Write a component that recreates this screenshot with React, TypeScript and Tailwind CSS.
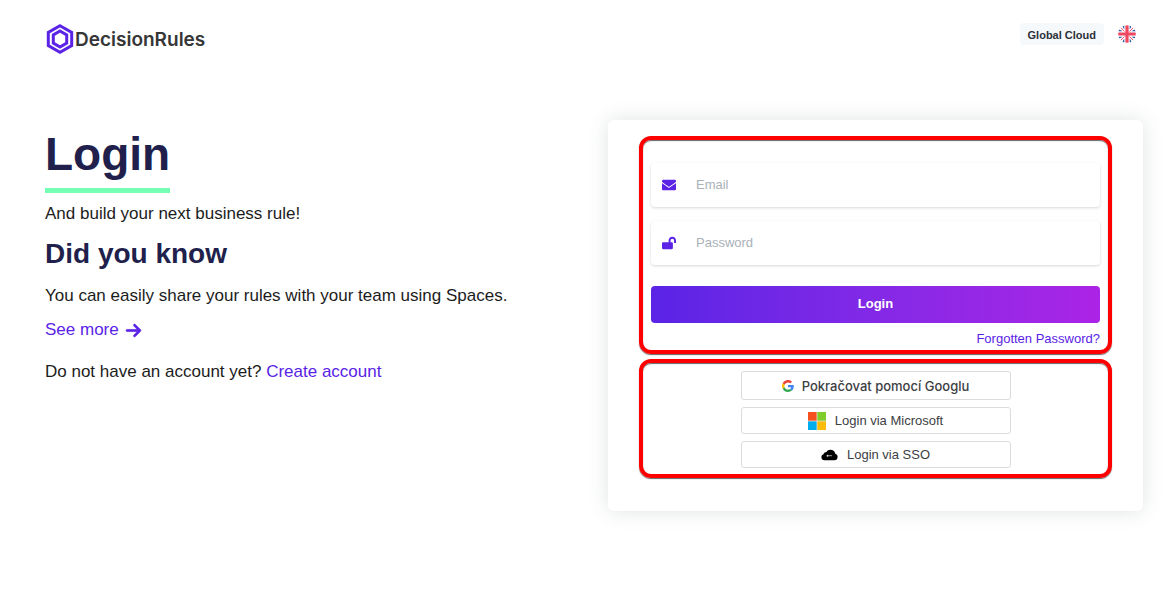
import type { ReactNode } from 'react';
import { FaEnvelope, FaLockOpen } from 'react-icons/fa';
import { FaArrowRight } from 'react-icons/fa6';

function Logo() {
  return (
    <a href="#home" className="flex items-center text-[#363636]">
      <svg viewBox="0 0 30 32" className="h-8 w-[30px]" fill="none" aria-hidden="true">
        <path d="M15 2.800 26.700 9.400v13.200L15 29.200 3.300 22.600V9.400z" stroke="#5a23e6" strokeWidth="3" />
        <path d="M15 8 21.700 11.900v8.200L15 24 8.300 20.100v-8.200z" stroke="#5a23e6" strokeWidth="3" />
      </svg>
      <span className="pt-0.5 font-[Inter,sans-serif] text-[19px] leading-[30px] font-semibold">DecisionRules</span>
    </a>
  );
}

function FlagIcon() {
  return (
    <svg viewBox="0 0 18 18" className="size-[18px]" aria-hidden="true">
      <clipPath id="flag-clip">
        <circle cx="9" cy="9" r="8.8" />
      </clipPath>
      <g clipPath="url(#flag-clip)">
        <rect width="18" height="18" fill="#fff" />
        <path d="M3.800 0H6.300V4.600zM14.200 0H11.700V4.600zM3.800 18H6.300V13.400zM14.200 18H11.700V13.400zM0 3.800V6.300H4.600zM18 3.800V6.300H13.400zM0 14.200V11.700H4.600zM18 14.200V11.700H13.400z" fill="#1e50a0" />
        <path d="M2 2 6.500 6.500M16 2 11.500 6.500M2 16 6.500 11.500M16 16 11.500 11.500" stroke="#f0506a" strokeWidth="1" />
        <path d="M9 0v18M0 9h18" stroke="#f0465f" strokeWidth="3.200" />
      </g>
    </svg>
  );
}

function GoogleIcon() {
  return (
    <svg viewBox="0 0 48 48" className="size-3" aria-hidden="true">
      <path fill="#EA4335" d="M24 9.5c3.54 0 6.71 1.22 9.21 3.6l6.85-6.85C35.9 2.38 30.47 0 24 0 14.62 0 6.51 5.38 2.56 13.22l7.98 6.19C12.43 13.72 17.74 9.5 24 9.5z" />
      <path fill="#4285F4" d="M46.98 24.55c0-1.57-.15-3.09-.38-4.55H24v9.02h12.94c-.58 2.96-2.26 5.48-4.78 7.18l7.73 6c4.51-4.18 7.09-10.36 7.09-17.65z" />
      <path fill="#FBBC05" d="M10.53 28.59c-.48-1.45-.76-2.99-.76-4.59s.27-3.14.76-4.59l-7.98-6.19C.92 16.46 0 20.12 0 24c0 3.88.92 7.54 2.56 10.78l7.97-6.19z" />
      <path fill="#34A853" d="M24 48c6.48 0 11.93-2.13 15.89-5.81l-7.73-6c-2.15 1.45-4.92 2.3-8.16 2.3-6.26 0-11.57-4.22-13.47-9.91l-7.98 6.19C6.51 42.62 14.62 48 24 48z" />
    </svg>
  );
}

function MicrosoftIcon() {
  return (
    <svg viewBox="0 0 18 18" className="size-[18px]" aria-hidden="true">
      <rect width="18" height="18" fill="#e6e0d8" />
      <rect width="8.6" height="8.6" fill="#f4511e" />
      <rect x="9.4" width="8.6" height="8.6" fill="#80cc28" />
      <rect y="9.4" width="8.6" height="8.6" fill="#00adef" />
      <rect x="9.4" y="9.4" width="8.6" height="8.6" fill="#fbbc09" />
    </svg>
  );
}

function CloudKeyIcon() {
  return (
    <svg viewBox="0 0 17 12" className="h-3 w-[17px]" aria-hidden="true">
      <path d="M3.600 11.200C1.600 11.200.4 10 .4 8.200c0-1.500.8-2.600 2.100-3C3 3.600 4.200 2.900 5.500 2.900 6.300 1.500 7.600.8 9.300.8c2.600 0 4.500 1.500 5 3.900 1.500.4 2.300 1.600 2.300 3.200 0 2-1.200 3.300-3.300 3.300z" fill="#000" />
      <path d="M7.500 6.700h3.600" stroke="#999" strokeWidth="1" fill="none" />
      <circle cx="6.600" cy="6.700" r="1" fill="#ddd" />
    </svg>
  );
}

function Field({ id, type, label, icon }: { id: string; type: string; label: string; icon: ReactNode }) {
  return (
    <div className="flex h-11 items-center rounded bg-white pl-[11px] text-sm text-[#5a23e6] shadow-[0_1px_3px_rgba(0,0,0,0.16)]">
      <label htmlFor={id} className="w-[34px] shrink-0" aria-label={label}>
        {icon}
      </label>
      <input
        id={id}
        type={type}
        placeholder={label}
        className="h-full min-w-0 flex-1 bg-transparent pb-0.5 text-[13px] text-gray-800 outline-none placeholder:text-[#a9b1b8]"
      />
    </div>
  );
}

const highlight = 'rounded-xl border-4 border-[#fe0000] shadow-[0_1px_1px_rgba(0,0,0,0.6),inset_0_1px_1px_rgba(0,0,0,0.6)]';
const provider = 'flex w-full items-center justify-center rounded-[3px] border border-[#dadce0] bg-white text-[#3c4043]';

export default function App() {
  return (
    <div className="bg-white font-['Liberation_Sans',Arial,sans-serif] text-[17px] leading-6 text-[#1c1c1c]">
      <header className="flex items-start justify-between pt-[23px] pr-[35px] pl-[45px]">
        <Logo />
        <div className="flex items-center gap-[14px]">
          <button type="button" className="h-[22px] rounded bg-[#f6f9fc] px-2 text-[11px] font-bold text-[#2c3038]">
            Global Cloud
          </button>
          <button type="button" aria-label="Language: English">
            <FlagIcon />
          </button>
        </div>
      </header>

      <main className="grid gap-7 pt-[65px] pr-7 pb-20 pl-[45px] md:grid-cols-2">
        <section>
          <h1 className="inline-block border-b-5 border-[#75ffb5] pt-2 pb-2 text-[46px] leading-[52px] font-bold text-[#211f4c]">
            Login
          </h1>
          <p className="mt-[9px]">And build your next business rule!</p>
          <h2 className="mt-2 text-[28px] leading-10 font-bold text-[#211f4c]">Did you know</h2>
          <p className="mt-[10px]">You can easily share your rules with your team using Spaces.</p>
          <a href="#spaces" className="mt-[10px] flex w-fit items-center gap-[6px] text-[#5a23e6]">
            See more
            <FaArrowRight className="size-[17px] stroke-current stroke-[20]" aria-hidden="true" />
          </a>
          <p className="mt-[18px]">
            Do not have an account yet?{' '}
            <a href="#register" className="text-[#5a23e6]">
              Create account
            </a>
          </p>
        </section>

        <section className="rounded-md bg-white px-[31px] pt-4 pb-[33px] text-[13px] shadow-[0_0_20px_rgba(60,80,80,0.16)]">
          <form className={`${highlight} px-2 pt-[23px] pb-px`} onSubmit={(event) => event.preventDefault()}>
            <div className="flex flex-col gap-[14px]">
              <Field id="email" type="email" label="Email" icon={<FaEnvelope />} />
              <Field id="password" type="password" label="Password" icon={<FaLockOpen />} />
            </div>
            <button
              type="submit"
              className="mt-[21px] h-[37px] w-full rounded bg-linear-to-r from-[#5a23e6] to-[#ab23e6] pb-0.5 text-[13px] font-bold text-white"
            >
              Login
            </button>
            <div className="mt-[6px] text-right leading-5">
              <a href="#forgotten" className="text-[#5a23e6]">
                Forgotten Password?
              </a>
            </div>
          </form>

          <div className={`${highlight} mt-[5px] px-2 pt-2 pb-[6px]`}>
            <div className="mx-auto flex max-w-[270px] flex-col gap-[7px]">
              <button type="button" className={`${provider} h-[29px] gap-2 font-[Inter,sans-serif] font-medium`}>
                <GoogleIcon />
                Pokračovat pomocí Googlu
              </button>
              <button type="button" className={`${provider} h-[27px] gap-[9px]`}>
                <MicrosoftIcon />
                Login via Microsoft
              </button>
              <button type="button" className={`${provider} h-[27px] gap-[9px]`}>
                <CloudKeyIcon />
                Login via SSO
              </button>
            </div>
          </div>
        </section>
      </main>
    </div>
  );
}
